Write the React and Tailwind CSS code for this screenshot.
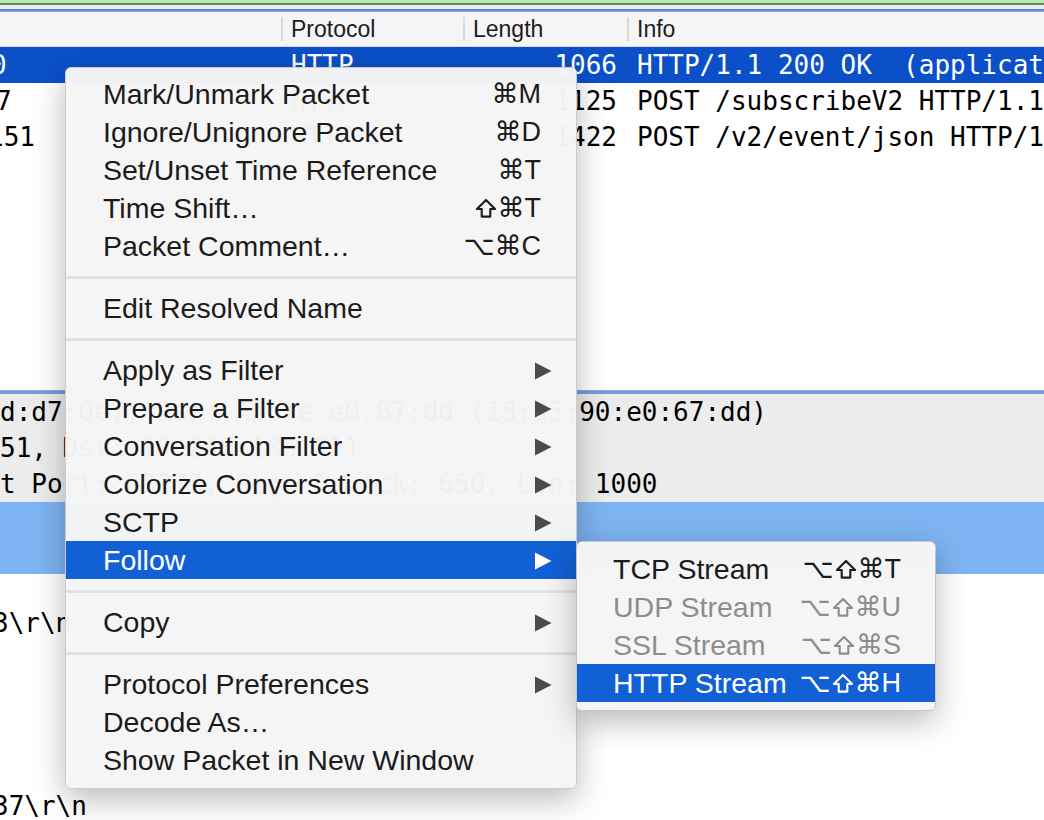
import React from "react";

// context menu entries, "sep" draws a divider
const menuItems = [
  { label: "Mark/Unmark Packet", keys: "⌘M" },
  { label: "Ignore/Unignore Packet", keys: "⌘D" },
  { label: "Set/Unset Time Reference", keys: "⌘T" },
  { label: "Time Shift…", keys: "⇧⌘T" },
  { label: "Packet Comment…", keys: "⌥⌘C" },
  "sep",
  { label: "Edit Resolved Name" },
  "sep",
  { label: "Apply as Filter", sub: true },
  { label: "Prepare a Filter", sub: true },
  { label: "Conversation Filter", sub: true },
  { label: "Colorize Conversation", sub: true },
  { label: "SCTP", sub: true },
  { label: "Follow", sub: true, active: true },
  "sep",
  { label: "Copy", sub: true },
  "sep",
  { label: "Protocol Preferences", sub: true },
  { label: "Decode As…" },
  { label: "Show Packet in New Window" },
];

const followItems = [
  { label: "TCP Stream", keys: "⌥⇧⌘T" },
  { label: "UDP Stream", keys: "⌥⇧⌘U", disabled: true },
  { label: "SSL Stream", keys: "⌥⇧⌘S", disabled: true },
  { label: "HTTP Stream", keys: "⌥⇧⌘H", active: true },
];

const packets = [
  { src: "0", srcShift: "ml-[-9px]", proto: "HTTP", len: "1066", info: "HTTP/1.1 200 OK  (application/json)", selected: true },
  { src: "7", srcShift: "ml-[-4px]", proto: "HTTP", len: "1125", info: "POST /subscribeV2 HTTP/1.1  (application/json)" },
  { src: "151", srcShift: "ml-[-12px]", proto: "HTTP", len: "1422", info: "POST /v2/event/json HTTP/1.1  (application/json)" },
];

function Arrow({ white }) {
  return (
    <svg width="18" height="18" viewBox="0 0 18 18" className="shrink-0">
      <polygon points="1,0.5 17.5,9 1,17.5" fill={white ? "#ffffff" : "#4b4b4b"} />
    </svg>
  );
}

function ShiftGlyph() {
  return (
    <svg width="22" height="21" viewBox="0 0 23 22" className="inline-block mx-[1px] align-[-2px]">
      <path
        d="M11.5 2 L21 11.5 H16 V19.5 H7 V11.5 H2 Z"
        fill="none"
        stroke="currentColor"
        strokeWidth="2.2"
        strokeLinejoin="round"
      />
    </svg>
  );
}

function Keys({ keys, className }) {
  return (
    <span className={`whitespace-nowrap text-[27px] font-['Liberation_Sans','DejaVu_Sans',sans-serif] ${className || ""}`}>
      {keys.split("").map((ch, i) => (ch === "⇧" ? <ShiftGlyph key={i} /> : <span key={i}>{ch}</span>))}
    </span>
  );
}

function MenuRow({ item }) {
  if (item === "sep") {
    return <div className="h-[3px] mt-[11px] mb-[10px] bg-[#e1e1e1]" />;
  }
  return (
    <div
      className={`h-[38px] flex items-center pl-[37px] pr-[24px] pt-[1px] ${
        item.active ? "bg-[#1260d6] text-white" : "text-[#1b1b1b]"
      }`}
    >
      <span className="flex-1 whitespace-nowrap">{item.label}</span>
      {item.keys && <Keys keys={item.keys} className="mr-[11px]" />}
      {item.sub && <Arrow white={item.active} />}
    </div>
  );
}

export default function App() {
  return (
    <div className="relative w-[1044px] h-[820px] overflow-hidden bg-white font-['Liberation_Sans',sans-serif]">
      {/* window chrome strips */}
      <div className="h-[3px] bg-[#a9f2a1]" />
      <div className="h-[2px] bg-[#7b7b7b]" />
      <div className="h-[4px] bg-[#ebebeb]" />
      <div className="h-[3px] bg-gradient-to-b from-[#4676cc] to-[#8fb1ea]" />

      {/* packet list header */}
      <div className="flex items-center h-[35px] bg-[#f5f5f5] border-b border-[#dadada] text-[23px] text-[#1c1c1c]">
        <div className="w-[281px]" />
        <div className="w-[182px] h-[24px] border-l-2 border-[#d9d9d9] pl-[8px] flex items-center">Protocol</div>
        <div className="w-[164px] h-[24px] border-l-2 border-[#d9d9d9] pl-[8px] flex items-center">Length</div>
        <div className="flex-1 h-[24px] border-l-2 border-[#d9d9d9] pl-[8px] flex items-center">Info</div>
      </div>

      {/* packet rows */}
      <div className="font-['DejaVu_Sans_Mono',monospace] text-[26px]">
        {packets.map((p) => (
          <div
            key={p.len}
            className={`flex items-center h-[36px] whitespace-pre ${
              p.selected ? "bg-[#0b50c9] text-white" : "text-black"
            }`}
          >
            <div className="w-[281px] overflow-hidden">
              <span className={`block ${p.srcShift}`}>{p.src}</span>
            </div>
            <div className="w-[182px] pl-[10px]">{p.proto}</div>
            <div className="w-[164px] pr-[10px] text-right">{p.len}</div>
            <div className="flex-1 pl-[10px] overflow-hidden">{p.info}</div>
          </div>
        ))}
      </div>

      <div className="h-[235px]" />
      <div className="h-[1px] bg-[#9aa6ba]" />
      <div className="h-[3px] bg-[#6f9de6]" />

      {/* packet details */}
      <div className="bg-[#ececec] font-['DejaVu_Sans_Mono',monospace] text-[26px] text-black whitespace-pre">
        <div className="h-[36px] flex items-center">d:d7:0e), Dst: Apple_e0:67:dd (18:65:90:e0:67:dd)</div>
        <div className="h-[36px] flex items-center">51, Dst: 17.248.185.211</div>
        <div className="h-[36px] flex items-center">t Port: 63373, Seq: 1, Ack: 650, Len: 1000</div>
      </div>
      <div className="h-[72px] bg-[#7eb4f3]" />

      <div className="font-['DejaVu_Sans_Mono',monospace] text-[26px] text-black whitespace-pre">
        <div className="h-[36px] mt-[31px] flex items-center ml-[-7px]">3\r\n</div>
        <div className="h-[36px] mt-[147px] flex items-center ml-[-7px]">37\r\n</div>
      </div>

      {/* context menu */}
      <div className="absolute left-[65px] top-[67px] w-[512px] rounded-[6px] border border-[#cbcbcb] bg-[#f5f5f5]/[0.975] pt-[7px] pb-[9px] text-[28.5px] shadow-[0_10px_32px_rgba(0,0,0,0.28)]">
        {menuItems.map((item, i) => (
          <MenuRow key={i} item={item} />
        ))}
      </div>

      {/* Follow submenu */}
      <div className="absolute left-[576px] top-[541px] w-[360px] rounded-[6px] border border-[#c6c6c6] bg-[#f5f5f5]/[0.98] py-[8px] text-[28.5px] shadow-[0_10px_32px_rgba(0,0,0,0.28)]">
        {followItems.map((item) => (
          <div
            key={item.label}
            className={`h-[38px] flex items-center pl-[36px] pr-[34px] pt-[1px] ${
              item.active ? "bg-[#1260d6] text-white" : item.disabled ? "text-[#8d8d8d]" : "text-[#1b1b1b]"
            }`}
          >
            <span className="flex-1 whitespace-nowrap">{item.label}</span>
            <Keys keys={item.keys} />
          </div>
        ))}
      </div>
    </div>
  );
}
